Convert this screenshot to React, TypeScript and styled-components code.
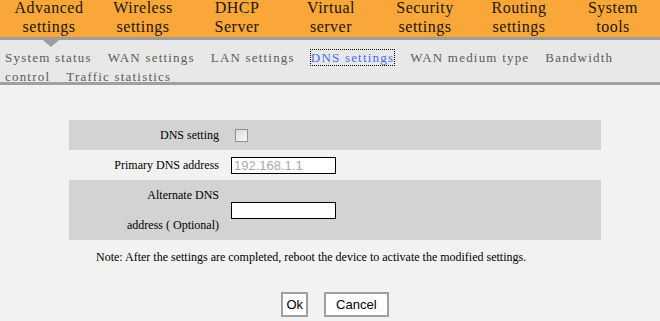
import React from "react";
import styled, { createGlobalStyle } from "styled-components";

const GlobalStyle = createGlobalStyle`
  html, body {
    margin: 0;
    padding: 0;
    background: #f2f2f2;
  }
  body {
    font-family: "Liberation Serif", "Times New Roman", serif;
  }
`;

const topMenu = [
  ["Advanced", "settings"],
  ["Wireless", "settings"],
  ["DHCP", "Server"],
  ["Virtual", "server"],
  ["Security", "settings"],
  ["Routing", "settings"],
  ["System", "tools"],
];

const subMenu = [
  "System status",
  "WAN settings",
  "LAN settings",
  "DNS settings",
  "WAN medium type",
  "Bandwidth control",
  "Traffic statistics",
];

const App = () => {
  return (
    <Page>
      <GlobalStyle />
      <TopBar>
        {topMenu.map(([a, b]) => (
          <TopItem key={a}>
            {a}
            <br />
            {b}
          </TopItem>
        ))}
      </TopBar>
      <Divider>
        <Pointer />
      </Divider>
      <SubBar>
        {subMenu.map((s) => (
          <SubItem key={s} active={s === "DNS settings"}>
            {s}
          </SubItem>
        ))}
      </SubBar>
      <Content>
        <Form>
          <Row shade>
            <Label>DNS setting</Label>
            <Field>
              <Check type="checkbox" />
            </Field>
          </Row>
          <Row>
            <Label>Primary DNS address</Label>
            <Field>
              <TextBox placeholder="192.168.1.1" />
            </Field>
          </Row>
          <Row shade tall>
            <Label>
              Alternate DNS
              <br />
              address ( Optional)
            </Label>
            <Field>
              <TextBox />
            </Field>
          </Row>
        </Form>
        <Note>
          Note: After the settings are completed, reboot the device to activate
          the modified settings.
        </Note>
        <Buttons>
          <Btn>Ok</Btn>
          <Btn wide>Cancel</Btn>
        </Buttons>
      </Content>
    </Page>
  );
};

export default App;

const Page = styled.div`
  width: 660px;
  height: 321px;
  overflow: hidden;
  background: #f2f2f2;
`;

const TopBar = styled.div`
  display: flex;
  height: 37px;
  padding-left: 2px;
  background: #faa73a;
`;

const TopItem = styled.div`
  width: 95px;
  text-align: center;
  font-size: 16px;
  line-height: 19px;
  letter-spacing: 0.5px;
  color: #21160c;
  margin-top: -2px;
`;

const Divider = styled.div`
  position: relative;
  height: 3px;
  background: #9c9c9c;
`;

const Pointer = styled.div`
  position: absolute;
  left: 43px;
  top: 3px;
  width: 0;
  height: 0;
  border-left: 8px solid transparent;
  border-right: 8px solid transparent;
  border-top: 7px solid #9c9c9c;
`;

const SubBar = styled.div`
  height: 45px;
  box-sizing: border-box;
  padding: 8px 0 0 5px;
  background: #e8e8e8;
  border-bottom: 3px solid #a0a0a0;
  font-size: 13px;
  line-height: 19px;
  letter-spacing: 1.2px;
`;

const SubItem = styled.span<{ active?: boolean }>`
  margin-right: 16px;
  color: ${(p) => (p.active ? "#4a6cf7" : "#5a5a5a")};
  outline: ${(p) => (p.active ? "1px dotted #000" : "none")};
`;

const Content = styled.div`
  padding: 35px 0 0 69px;
  width: 532px;
`;

const Form = styled.div`
  display: flex;
  flex-direction: column;
`;

const Row = styled.div<{ shade?: boolean; tall?: boolean }>`
  display: grid;
  grid-template-columns: 150px 1fr;
  column-gap: 12px;
  align-items: center;
  height: ${(p) => (p.tall ? "60px" : "30px")};
  background: ${(p) => (p.shade ? "#d3d3d3" : "transparent")};
`;

const Label = styled.div`
  text-align: right;
  font-size: 12px;
  line-height: 30px;
  color: #000;
`;

const Field = styled.div`
  display: flex;
  align-items: center;
`;

const Check = styled.input`
  appearance: none;
  margin: 0 0 0 4px;
  width: 13px;
  height: 13px;
  border: 1px solid #8f8f8f;
  background: linear-gradient(135deg, #dcdcdc, #f8f8f8);
  box-sizing: border-box;
`;

const TextBox = styled.input`
  width: 105px;
  height: 17px;
  box-sizing: border-box;
  border: 1px solid #000;
  background: #fff;
  padding: 0 2px;
  font-family: "Liberation Sans", Arial, sans-serif;
  font-size: 13px;
  &::placeholder {
    color: #a9a9a9;
  }
`;

const Note = styled.div`
  margin: 9px 0 0 27px;
  font-size: 12px;
  line-height: 16px;
  color: #000;
`;

const Buttons = styled.div`
  display: flex;
  justify-content: center;
  gap: 16px;
  margin-top: 27px;
`;

const Btn = styled.button<{ wide?: boolean }>`
  height: 25px;
  padding: ${(p) => (p.wide ? "0 10px" : "0 3px")};
  background: #fff;
  border: 2px solid #a0a0a0;
  font-family: "Liberation Sans", Arial, sans-serif;
  font-size: 13px;
  color: #000;
`;
